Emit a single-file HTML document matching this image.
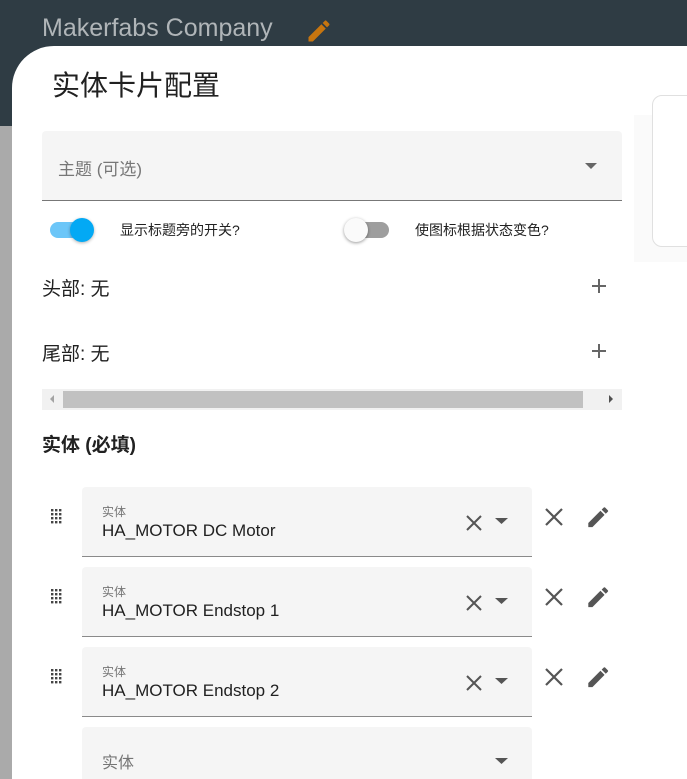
<!DOCTYPE html>
<html><head><meta charset="utf-8"><style>
*{margin:0;padding:0;box-sizing:border-box}
html,body{width:687px;height:779px;overflow:hidden}
body{position:relative;background:#fff;font-family:"Liberation Sans","Noto Sans CJK SC",sans-serif;color:#212121}
.a{position:absolute}
.field{position:absolute;left:82px;width:450px;height:70px;background:#f5f5f5;border-bottom:1px solid #8a8a8a;border-radius:4px 4px 0 0}
.lbl{position:absolute;left:20px;top:16px;font-size:12px;color:#757575}
.val{position:absolute;left:20px;top:34px;font-size:17px;color:#212121}
</style></head><body>
<div class="a" style="left:0;top:0;width:687px;height:126px;background:#2f3c44"></div>
<div class="a" style="left:0;top:126px;width:12px;height:653px;background:#aaa"></div>
<div class="a" style="left:42px;top:14px;font-size:25px;color:#b0b5b8">Makerfabs Company</div>
<svg class="a" style="left:305px;top:17px" width="28" height="28" viewBox="0 0 24 24"><path fill="#c7750f" d="M3 17.25V21h3.75L17.81 9.94l-3.75-3.75L3 17.25zM20.71 7.04a1 1 0 000-1.41l-2.34-2.34a1 1 0 00-1.41 0l-1.83 1.83 3.75 3.75 1.83-1.83z"/></svg>
<div class="a" style="left:12px;top:46px;width:675px;height:733px;background:#fff;border-radius:42px 0 0 0"></div>
<div class="a" style="left:52px;top:64px;font-size:28px;color:#212121">实体卡片配置</div>
<div class="a" style="left:634px;top:115px;width:60px;height:147px;background:#fafafa"></div>
<div class="a" style="left:652px;top:95px;width:60px;height:152px;background:#fff;border:1px solid #e0e0e0;border-radius:10px"></div>
<div class="a" style="left:42px;top:131px;width:580px;height:70px;background:#f5f5f5;border-bottom:1px solid #777;border-radius:4px 4px 0 0"></div>
<div class="a" style="left:58px;top:155px;font-size:17px;color:#777">主题 (可选)</div>
<div class="a" style="left:585px;top:163px;border-left:6px solid transparent;border-right:6px solid transparent;border-top:6px solid #666"></div>
<div class="a" style="left:50px;top:222px;width:36px;height:16px;border-radius:8px;background:#6cc6f8"></div>
<div class="a" style="left:70px;top:218px;width:24px;height:24px;border-radius:50%;background:#03a9f4;box-shadow:0 1px 3px rgba(0,0,0,.3)"></div>
<div class="a" style="left:120px;top:220px;font-size:14px">显示标题旁的开关?</div>
<div class="a" style="left:353px;top:222px;width:36px;height:16px;border-radius:8px;background:#9e9e9e"></div>
<div class="a" style="left:344px;top:218px;width:24px;height:24px;border-radius:50%;background:#fafafa;box-shadow:0 1px 3px rgba(0,0,0,.4)"></div>
<div class="a" style="left:415px;top:220px;font-size:14px">使图标根据状态变色?</div>
<div class="a" style="left:42px;top:274px;font-size:19px">头部: 无</div>
<div class="a" style="left:42px;top:339px;font-size:19px">尾部: 无</div>
<svg class="a" style="left:587px;top:274px" width="24" height="24" viewBox="0 0 24 24"><path fill="#666" d="M19 13h-6v6h-2v-6H5v-2h6V5h2v6h6v2z"/></svg>
<svg class="a" style="left:587px;top:339px" width="24" height="24" viewBox="0 0 24 24"><path fill="#666" d="M19 13h-6v6h-2v-6H5v-2h6V5h2v6h6v2z"/></svg>
<div class="a" style="left:42px;top:389px;width:580px;height:21px;background:#f1f1f1"></div>
<div class="a" style="left:63px;top:391px;width:520px;height:17px;background:#c1c1c1"></div>
<div class="a" style="left:50px;top:395px;border-top:4px solid transparent;border-bottom:4px solid transparent;border-right:4px solid #a3a3a3"></div>
<div class="a" style="left:609px;top:395px;border-top:4px solid transparent;border-bottom:4px solid transparent;border-left:4px solid #505050"></div>
<div class="a" style="left:42px;top:430px;font-size:19px;font-weight:bold">实体 (必填)</div>

<div class="field" style="top:487px"><div class="lbl">实体</div><div class="val">HA_MOTOR DC Motor</div></div>
<div class="field" style="top:567px"><div class="lbl">实体</div><div class="val">HA_MOTOR Endstop 1</div></div>
<div class="field" style="top:647px"><div class="lbl">实体</div><div class="val">HA_MOTOR Endstop 2</div></div>
<div class="field" style="top:727px;border-bottom:none"><div class="lbl" style="top:22px;font-size:16px">实体</div></div>

<svg class="a" style="left:0;top:0" width="687" height="779">
<defs>
<g id="r1">
<g fill="#444"><rect x="51" y="509" width="2.4" height="2.4"/><rect x="55" y="509" width="2.4" height="2.4"/><rect x="59" y="509" width="2.4" height="2.4"/><rect x="51" y="513" width="2.4" height="2.4"/><rect x="55" y="513" width="2.4" height="2.4"/><rect x="59" y="513" width="2.4" height="2.4"/><rect x="51" y="517" width="2.4" height="2.4"/><rect x="55" y="517" width="2.4" height="2.4"/><rect x="59" y="517" width="2.4" height="2.4"/><rect x="51" y="521" width="2.4" height="2.4"/><rect x="55" y="521" width="2.4" height="2.4"/><rect x="59" y="521" width="2.4" height="2.4"/></g>
<path d="M467 516l14 14M481 516l-14 14" stroke="#555" stroke-width="2"/>
<path d="M495 518h13l-6.5 6z" fill="#555"/>
<path d="M546 509l16 16M562 509l-16 16" stroke="#555" stroke-width="2.2"/>
<path fill="#555" transform="translate(585,504) scale(1.1)" d="M3 17.25V21h3.75L17.81 9.94l-3.75-3.75L3 17.25zM20.71 7.04a1 1 0 000-1.41l-2.34-2.34a1 1 0 00-1.41 0l-1.83 1.83 3.75 3.75 1.83-1.83z"/>
</g></defs>
<use href="#r1"/>
<use href="#r1" y="80"/>
<use href="#r1" y="160"/>
<path d="M495 758h13l-6.5 6z" fill="#555"/>
</svg>
</body></html>
